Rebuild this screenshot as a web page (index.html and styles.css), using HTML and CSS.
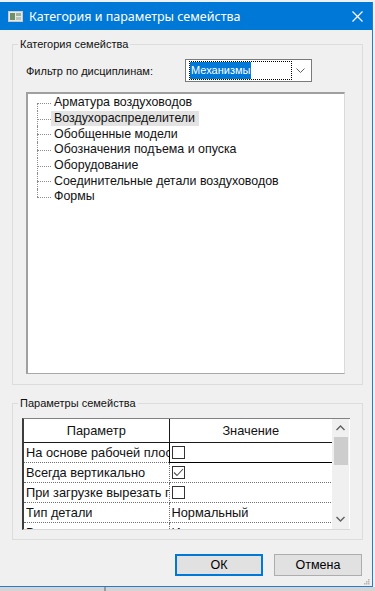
FILE: index.html
```html
<!DOCTYPE html>
<html lang="ru">
<head>
<meta charset="utf-8">
<title>Категория и параметры семейства</title>
<link rel="stylesheet" href="styles.css">
</head>
<body>
<div class="screen">
  <div class="window">
    <div class="titlebar">
      <svg class="app-icon" width="15" height="11" viewBox="0 0 15 11">
        <rect x="0.5" y="0.5" width="14" height="10" fill="#e8e8e8" stroke="#c9c9c9"/>
        <rect x="2" y="2" width="5" height="7" fill="#6d8f6a"/>
        <rect x="8" y="2" width="5" height="3" fill="#9fb29c"/>
        <rect x="8" y="6" width="5" height="3" fill="#b8c4b6"/>
      </svg>
      <span class="title">Категория и параметры семейства</span>
      <svg class="close" width="11" height="11" viewBox="0 0 11 11">
        <path d="M0.5 0.5 L10.5 10.5 M10.5 0.5 L0.5 10.5" stroke="#ffffff" stroke-width="1.2" fill="none"/>
      </svg>
    </div>
    <div class="client">
      <fieldset class="group group-category">
        <legend>Категория семейства</legend>
        <div class="filter-row">
          <span class="filter-label">Фильтр по дисциплинам:</span>
          <div class="combo">
            <span class="combo-focus"><span class="combo-value">Механизмы</span></span>
            <svg class="combo-arrow" width="9" height="5" viewBox="0 0 9 5">
              <path d="M0.5 0.5 L4.5 4.5 L8.5 0.5" stroke="#606060" fill="none"/>
            </svg>
          </div>
        </div>
        <div class="tree">
          <ul class="tree-list">
            <li><span class="node">Арматура воздуховодов</span></li>
            <li><span class="node selected">Воздухораспределители</span></li>
            <li><span class="node">Обобщенные модели</span></li>
            <li><span class="node">Обозначения подъема и опуска</span></li>
            <li><span class="node">Оборудование</span></li>
            <li><span class="node">Соединительные детали воздуховодов</span></li>
            <li><span class="node">Формы</span></li>
          </ul>
        </div>
      </fieldset>

      <fieldset class="group group-params">
        <legend>Параметры семейства</legend>
        <div class="grid">
          <div class="grid-body">
            <table class="params">
              <colgroup><col class="c1"><col class="c2"></colgroup>
              <thead>
                <tr><th>Параметр</th><th>Значение</th></tr>
              </thead>
              <tbody>
                <tr><td><span class="cell-text">На основе рабочей плоскости</span></td><td class="current"><span class="check"></span></td></tr>
                <tr><td><span class="cell-text">Всегда вертикально</span></td><td><span class="check checked"><svg width="11" height="9" viewBox="0 0 11 9"><path d="M1 4.5 L4 7.5 L10 1" stroke="#505050" stroke-width="1.1" fill="none"/></svg></span></td></tr>
                <tr><td><span class="cell-text">При загрузке вырезать пустоты</span></td><td><span class="check"></span></td></tr>
                <tr><td><span class="cell-text">Тип детали</span></td><td><span class="cell-text">Нормальный</span></td></tr>
                <tr><td><span class="cell-text">Видимость</span></td><td><span class="cell-text">Использовать</span></td></tr>
              </tbody>
            </table>
          </div>
          <div class="vscroll">
            <svg class="sb-arrow" width="9" height="6" viewBox="0 0 9 6"><path d="M0.5 5 L4.5 1 L8.5 5" stroke="#606060" stroke-width="1.4" fill="none"/></svg>
            <div class="sb-track"><div class="sb-thumb"></div></div>
            <svg class="sb-arrow" width="9" height="6" viewBox="0 0 9 6"><path d="M0.5 1 L4.5 5 L8.5 1" stroke="#606060" stroke-width="1.4" fill="none"/></svg>
          </div>
        </div>
      </fieldset>

      <div class="buttons">
        <button class="btn btn-default" type="button">ОК</button>
        <button class="btn" type="button">Отмена</button>
      </div>
      <div class="grip">
        <svg width="6" height="6" viewBox="0 0 6 6">
          <rect x="4" y="0" width="1.5" height="1.5" fill="#b5b5b5"/>
          <rect x="2" y="2" width="1.5" height="1.5" fill="#b5b5b5"/>
          <rect x="4" y="2" width="1.5" height="1.5" fill="#b5b5b5"/>
          <rect x="0" y="4" width="1.5" height="1.5" fill="#b5b5b5"/>
          <rect x="2" y="4" width="1.5" height="1.5" fill="#b5b5b5"/>
          <rect x="4" y="4" width="1.5" height="1.5" fill="#b5b5b5"/>
        </svg>
      </div>
    </div>
  </div>
  <div class="below">
    <div class="below-left"></div>
    <div class="below-line"></div>
    <div class="below-right"></div>
  </div>
</div>
</body>
</html>
```

FILE: styles.css
```css
* { box-sizing: border-box; }

html, body {
  margin: 0;
  padding: 0;
  background: #eef1f4;
}

body {
  font-family: "Liberation Sans", Arial, sans-serif;
  font-size: 11px;
  color: #111;
}

.screen {
  width: 375px;
  height: 591px;
  padding-top: 2px;
  display: flex;
  flex-direction: column;
}

.window {
  width: 373px;
  height: 585px;
  background: #f0f0f0;
  border-right: 1px solid #2a7bc6;
  border-bottom: 1px solid #2a7bc6;
  display: flex;
  flex-direction: column;
}

/* Title bar */
.titlebar {
  height: 28px;
  background: #0078d7;
  display: flex;
  align-items: center;
  padding-left: 8px;
  padding-right: 9px;
  flex: none;
}

.app-icon { flex: none; margin-top: 1px; }

.title {
  font-family: "Noto Sans", "Open Sans", sans-serif;
  font-size: 12.5px;
  color: #ffffff;
  margin-left: 6px;
  flex: 1;
  white-space: nowrap;
}

.close { flex: none; }

/* Client area */
.client {
  flex: 1;
  display: flex;
  flex-direction: column;
  padding: 7px 10px 0 12px;
}

.group {
  margin: 0;
  border: 1px solid #dcdcdc;
  min-width: 0;
}

.group legend {
  padding: 0 2px;
  line-height: 14px;
  font-size: 11px;
}

.group-category {
  width: 351px;
  padding: 8px 17px 10px 13px;
}

.group-category legend { margin-left: -8px; }

.filter-row {
  display: flex;
  align-items: center;
  height: 23px;
}

.filter-label {
  width: 159px;
  flex: none;
}

.combo {
  width: 127px;
  height: 23px;
  background: #ffffff;
  border: 1px solid #7a7a7a;
  display: flex;
  align-items: center;
  padding: 1px 6px 1px 3px;
}

.combo-focus {
  flex: 1;
  height: 19px;
  border: 1px dotted #000;
  display: flex;
  align-items: center;
  margin-right: 4px;
}

.combo-value {
  background: #0078d7;
  color: #ffffff;
  line-height: 17px;
  padding: 0 1px;
  font-size: 11px;
}

.combo-arrow { flex: none; }

.tree {
  margin-top: 10px;
  height: 282px;
  background: #ffffff;
  border-top: 2px solid #a0a0a0;
  border-left: 2px solid #a0a0a0;
  border-right: 1px solid #dadada;
  border-bottom: 1px solid #a8a8a8;
  padding-top: 1px;
}

.tree-list {
  list-style: none;
  margin: 0 0 0 9px;
  padding: 0;
}

.tree-list li {
  position: relative;
  height: 15.7px;
  padding-left: 14px;
  display: flex;
  align-items: center;
  white-space: nowrap;
}

.tree-list li::before {
  content: "";
  position: absolute;
  left: 0;
  top: 50%;
  width: 14px;
  border-top: 1px dotted #8c8c8c;
}

.tree-list li::after {
  content: "";
  position: absolute;
  left: 0;
  top: 0;
  bottom: 0;
  border-left: 1px dotted #8c8c8c;
}

.tree-list li:first-child::after { top: 50%; }
.tree-list li:last-child::after { bottom: 50%; }

.node {
  padding: 0 4px 0 3px;
  line-height: 15px;
  font-size: 12.4px;
}

.node.selected { background: #e3e3e3; }

/* Parameters group */
.group-params {
  width: 351px;
  margin-top: 11px;
  padding: 8px 12px 9px 9px;
}

.group-params legend { margin-left: -4px; }

.grid {
  height: 112px;
  display: flex;
  border-top: 1px solid #828282;
  border-left: 2px solid #3c3c3c;
  border-bottom: 1px solid #d8d8d8;
  background: #ffffff;
}

.grid-body {
  width: 308px;
  overflow: hidden;
  flex: none;
}

.params {
  border-collapse: collapse;
  table-layout: fixed;
  width: 308px;
}

.params col.c1 { width: 145px; }
.params col.c2 { width: 163px; }

.params th {
  height: 23px;
  font-weight: normal;
  font-size: 12.8px;
  text-align: center;
  background: #ffffff;
  border-bottom: 1px solid #1a1a1a;
  padding: 0;
}

.params th:first-child { border-right: 1px solid #1a1a1a; }

.params td {
  height: 20px;
  padding: 0 0 0 2px;
  border: 1px dotted #707070;
  border-left: none;
  white-space: nowrap;
  overflow: hidden;
  font-size: 12.8px;
}

.params td:first-child { border-right: 1px dotted #707070; }

.params td.current {
  border: 1.5px solid #000;
  padding-left: 2px;
}

.cell-text { display: block; overflow: hidden; white-space: nowrap; }

.check {
  width: 13px;
  height: 13px;
  border: 1px solid #333;
  background: #fff;
  display: flex;
  align-items: center;
  justify-content: center;
  margin-top: 1px;
}

.vscroll {
  width: 17px;
  flex: none;
  background: #f0f0f0;
  display: flex;
  flex-direction: column;
  align-items: center;
  padding: 6px 0 7px;
}

.sb-arrow { flex: none; }

.sb-track {
  flex: 1;
  width: 100%;
  padding: 6px 1px 0 2px;
}

.sb-thumb {
  height: 28px;
  background: #cdcdcd;
}

/* Buttons */
.buttons {
  display: flex;
  justify-content: flex-end;
  gap: 11px;
  margin-top: 14px;
}

.btn {
  font-family: "Liberation Sans", Arial, sans-serif;
  font-size: 12.5px;
  height: 22px;
  width: 88px;
  background: #e1e1e1;
  border: 1px solid #adadad;
  color: #000;
  padding: 0;
  margin: 0;
}

.btn-default {
  border: 2px solid #0078d7;
}

.grip {
  display: flex;
  justify-content: flex-end;
  margin-top: 3px;
  margin-right: -8px;
}

/* Area below window */
.below {
  flex: 1;
  display: flex;
  background: #d4d4d4;
}

.below-left { width: 104px; }
.below-line { width: 2px; background: #9a9a9a; }
.below-right { flex: 1; }
```
